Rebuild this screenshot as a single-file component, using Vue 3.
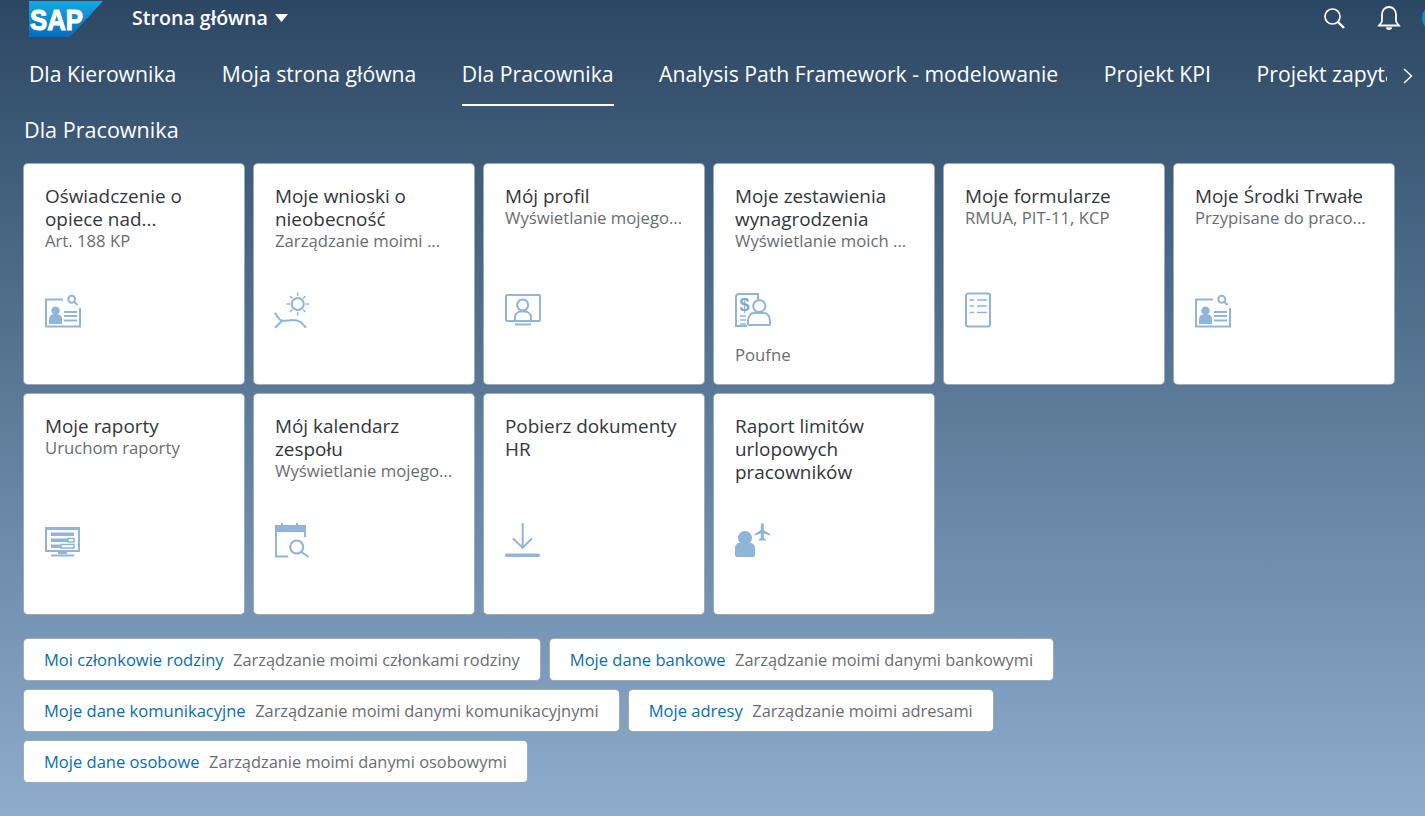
<script setup>
const tabs = ['Dla Kierownika', 'Moja strona główna', 'Dla Pracownika', 'Analysis Path Framework - modelowanie', 'Projekt KPI', 'Projekt zapytań']

const icons = {
  card: [
    { d: 'M18 4.5H1V31.5H35V13' },
    { d: 'M19 17h13M19 21h13M19 25.500h13' },
    { d: 'M26.700 .8a3.500 3.500 0 1 0 .01 0ZM29.500 7l3 3' },
    { d: 'M10.500 11.500a4.200 4.200 0 1 1-.01 0ZM4 29v-5c0-3 2-4.500 4-4.500h5c2 0 4 1.500 4 4.500v5Z', fill: true }
  ],
  sun: [
    { d: 'M22.700 3a6 6 0 1 0 .01 0Z' },
    { d: 'M22.700 -2.500V1M22.700 17v3.500M11.500 9h3.500M30.500 9H34M14.800 1l2.500 2.500M28 14.500l2.500 2.500M30.500 1L28 3.500M17.300 14.500L14.800 17', thin: true },
    { d: 'M0 17.700C2 21 4 25 7 25.700c3.500.6 8-.8 11-.7 3 0 5 .3 7 1.700 2 1.300 4 4 6 6M7 25.700L0 32.700' }
  ],
  profile: [
    { d: 'M2 0h32a1 1 0 0 1 1 1v24a1 1 0 0 1-1 1H2a1 1 0 0 1-1-1V1a1 1 0 0 1 1-1ZM10 29.500h16' },
    { d: 'M17.700 4.500a5.500 5.500 0 1 0 .01 0ZM10 26v-4c0-3 3-5.500 6-5.500h4c3 0 6 2.500 6 5.500v4' }
  ],
  pay: [
    { d: 'M23 5V-1H4a3 3 0 0 0-3 3V31h11' },
    { d: 'M5 21h6M5 25h6M5 29h6', thin: true },
    { d: 'M24.300 5a6 6 0 1 0 .01 0ZM13 29v-3c0-5 3-8 6-8h10c3 0 6 3 6 8v3a1 1 0 0 1-1 1H14a1 1 0 0 1-1-1Z' }
  ],
  form: [
    { d: 'M3 -1.500h20a2 2 0 0 1 2 2v29a2 2 0 0 1-2 2H3a2 2 0 0 1-2-2v-29a2 2 0 0 1 2-2Z' },
    { d: 'M4.500 5H9M12 5h10M4.500 11H9M12 11h10M4.500 17.500H9M12 17.500h10', thin: true }
  ],
  report: [
    { d: 'M1 3h33v23H1Z' },
    { d: 'M0 2h35v3H0ZM6 7.500h23v3.500H6ZM6 13.500h17v3.500H6ZM6 19.500h10v3.500H6Z', fill: true },
    { d: 'M23 13.500h6v3.500h-6ZM16 19.500h13v3.500H16Z', thin: true },
    { d: 'M13 26h9v3h-9ZM6 29.500h23v2H6Z', fill: true }
  ],
  calendar: [
    { d: 'M1 7v24.500h12M30 7v5' },
    { d: 'M0 0h6v-2h2v2h13v-2h2v2h8v7H0Z', fill: true },
    { d: 'M21.700 15.500a6.500 6.500 0 1 0 .01 0ZM26.500 27l7 5' }
  ],
  download: [
    { d: 'M17.700 -2V22.500M8 13.500l9.700 9.200 9.200-9.200' },
    { d: 'M1.700 28.500h31.600a1.700 1.700 0 0 1 0 3.500H1.700a1.700 1.700 0 0 1 0-3.500Z', fill: true }
  ],
  vacation: [
    { d: 'M10 6a7 7 0 1 1-.01 0ZM0 30v-7c0-3 2-5 5-5h10c3 0 5 2 5 5v7a2 2 0 0 1-2 2H2a2 2 0 0 1-2-2Z', fill: true },
    { d: 'M27.300 -2c1 0 1.500 1.500 1.500 3v4l6.200 4v1.500l-6.200-2v4.500l2 1.300v1.200h-7v-1.200l2-1.300V8.500l-6.200 2V9l6.200-4V1c0-1.500.5-3 1.500-3Z', fill: true }
  ]
}

const tiles = [
  { title: 'Oświadczenie o opiece nad...', sub: 'Art. 188 KP', icon: 'card' },
  { title: 'Moje wnioski o nieobecność', sub: 'Zarządzanie moimi ...', icon: 'sun' },
  { title: 'Mój profil', sub: 'Wyświetlanie mojego...', icon: 'profile' },
  { title: 'Moje zestawienia wynagrodzenia', sub: 'Wyświetlanie moich ...', icon: 'pay', foot: 'Poufne' },
  { title: 'Moje formularze', sub: 'RMUA, PIT-11, KCP', icon: 'form' },
  { title: 'Moje Środki Trwałe', sub: 'Przypisane do praco...', icon: 'card' },
  { title: 'Moje raporty', sub: 'Uruchom raporty', icon: 'report' },
  { title: 'Mój kalendarz zespołu', sub: 'Wyświetlanie mojego...', icon: 'calendar' },
  { title: 'Pobierz dokumenty HR', sub: '', icon: 'download' },
  { title: 'Raport limitów urlopowych pracowników', sub: '', icon: 'vacation' }
]

const links = [
  [
    { name: 'Moi członkowie rodziny', desc: 'Zarządzanie moimi członkami rodziny' },
    { name: 'Moje dane bankowe', desc: 'Zarządzanie moimi danymi bankowymi' }
  ],
  [
    { name: 'Moje dane komunikacyjne', desc: 'Zarządzanie moimi danymi komunikacyjnymi' },
    { name: 'Moje adresy', desc: 'Zarządzanie moimi adresami' }
  ],
  [
    { name: 'Moje dane osobowe', desc: 'Zarządzanie moimi danymi osobowymi' }
  ]
]

function iconClass(p) {
  if (p.fill) return 'ic-fill'
  return p.thin ? 'ic-thin' : 'ic-line'
}
</script>

<template>
  <div class="page">
    <header class="shell">
      <svg class="logo" width="76" height="38" viewBox="0 0 76 38">
        <defs>
          <linearGradient id="sapBlue" x1="0" y1="0" x2="0" y2="1">
            <stop offset="0" stop-color="#16a8e6" />
            <stop offset="1" stop-color="#0a6cb8" />
          </linearGradient>
        </defs>
        <path d="M0 1h74L41 37H0Z" fill="url(#sapBlue)" />
        <text x="1" y="30" class="logo-text" textLength="53" lengthAdjust="spacingAndGlyphs">SAP</text>
      </svg>
      <div class="app-title">Strona główna</div>
      <svg class="caret" width="13" height="8" viewBox="0 0 13 8"><path d="M0 0h13L6.500 8Z" fill="#fff" /></svg>
      <div class="shell-right">
        <svg width="24" height="24" viewBox="0 0 24 24" fill="none" stroke="#fff">
          <circle cx="10.500" cy="10.500" r="7.500" stroke-width="1.700" />
          <path d="M16 16l6 6" stroke-width="2.400" />
        </svg>
        <svg width="24" height="26" viewBox="0 0 24 26" fill="none" stroke="#fff" stroke-width="1.800">
          <path d="M5 16V9.500C5 5 8 2 12 2s7 3 7 7.500V16c0 1.500 2 3 3 4.500H2C3 19 5 17.500 5 16Z" />
          <path d="M9.500 22.500c1 2 4 2 5 0" fill="#fff" />
        </svg>
        <div class="avatar"></div>
      </div>
    </header>

    <nav class="tabs">
      <div class="tab-strip">
        <div v-for="(t, i) in tabs" :key="t" class="tab" :class="{ active: i === 2 }">{{ t }}</div>
      </div>
      <svg class="more" width="10" height="16" viewBox="0 0 10 16" fill="none" stroke="#fff" stroke-width="1.400"><path d="M1 1l7.500 7L1 15" /></svg>
    </nav>

    <main class="content">
      <h2 class="section">Dla Pracownika</h2>
      <div class="grid">
        <div v-for="tile in tiles" :key="tile.title" class="tile">
          <div class="tile-title">{{ tile.title }}</div>
          <div v-if="tile.sub" class="tile-sub">{{ tile.sub }}</div>
          <div class="tile-bottom">
            <svg class="tile-icon" width="38" height="38" viewBox="0 0 38 38">
              <path v-for="p in icons[tile.icon]" :key="p.d" :d="p.d" :class="iconClass(p)" />
              <text v-if="tile.icon === 'pay'" x="4.500" y="16" class="ic-text">$</text>
            </svg>
            <div class="tile-foot">{{ tile.foot }}</div>
          </div>
        </div>
      </div>

      <div class="links">
        <div v-for="(row, r) in links" :key="r" class="link-row">
          <div v-for="l in row" :key="l.name" class="link">
            <span class="link-name">{{ l.name }}</span>
            <span class="link-desc">{{ l.desc }}</span>
          </div>
        </div>
      </div>
    </main>
  </div>
</template>

<style>
html, body {
  margin: 0;
  overflow: hidden;
}
</style>

<style scoped>
* {
  box-sizing: border-box;
}
.page {
  width: 1425px;
  height: 816px;
  overflow: hidden;
  font-family: "Open Sans", "Liberation Sans", sans-serif;
  background: linear-gradient(180deg, #2c4763 0%, #3f5c7a 20%, #8eadcd 100%);
  color: #fff;
}
.shell {
  display: flex;
  align-items: center;
  height: 36px;
  padding-left: 29px;
}
.logo {
  flex: none;
  align-self: flex-start;
}
.logo-text {
  font-family: "Liberation Sans", sans-serif;
  font-weight: 700;
  font-size: 29px;
  fill: #fff;
  stroke: #fff;
  stroke-width: 1.1;
}
.app-title {
  margin-left: 27px;
  margin-bottom: 2px;
  font-size: 19.6px;
  font-weight: 600;
}
.caret {
  margin-left: 7px;
}
.shell-right {
  margin-left: auto;
  display: flex;
  align-items: center;
  gap: 31px;
  margin-right: -25px;
}
.avatar {
  width: 28px;
  height: 28px;
  border-radius: 50%;
  background: #0a8fd1;
  margin-left: -10px;
}
.tabs {
  display: flex;
  height: 70px;
  padding-left: 29px;
}
.tab-strip {
  display: flex;
  gap: 45.5px;
  width: 1358px;
  overflow: hidden;
  flex: none;
}
.tab {
  white-space: nowrap;
  font-size: 21.2px;
  line-height: 30px;
  padding: 23px 0 15px;
  border-bottom: 2px solid transparent;
}
.tab.active {
  border-bottom-color: #fff;
}
.more {
  align-self: center;
  margin-left: 16px;
  margin-top: 10px;
}
.content {
  padding: 0 23px;
}
.section {
  margin: 0;
  height: 57px;
  padding: 9px 0 0 1px;
  font-size: 21.6px;
  line-height: 30px;
  font-weight: 400;
}
.grid {
  display: grid;
  grid-template-columns: repeat(6, 222px);
  grid-auto-rows: 222px;
  gap: 8px;
}
.tile {
  display: flex;
  flex-direction: column;
  background: #fff;
  border: 1px solid rgba(40, 70, 100, 0.45);
  border-radius: 5px;
  padding: 21px 20px 0 21px;
  color: #32363a;
}
.tile-title {
  font-size: 18.9px;
  line-height: 23px;
}
.tile-sub {
  font-size: 16.7px;
  line-height: 20px;
  color: #6a6d70;
  white-space: nowrap;
}
.tile-bottom {
  margin-top: auto;
  height: 89px;
}
.tile-icon {
  display: block;
  overflow: visible;
}
.tile-foot {
  margin-top: 12px;
  font-size: 16.7px;
  line-height: 20px;
  color: #6a6d70;
}
.ic-line {
  fill: none;
  stroke: #91b5d9;
  stroke-width: 2;
}
.ic-thin {
  fill: none;
  stroke: #91b5d9;
  stroke-width: 1.500;
}
.ic-fill {
  fill: #91b5d9;
  stroke: none;
}
.ic-text {
  font-family: "Liberation Sans", sans-serif;
  font-weight: 700;
  font-size: 18px;
  fill: #7fa8d0;
}
.links {
  margin-top: 23px;
  display: flex;
  flex-direction: column;
  gap: 8px;
  align-items: flex-start;
}
.link-row {
  display: flex;
  gap: 8px;
}
.link {
  height: 43px;
  padding: 0 20px;
  display: flex;
  align-items: center;
  gap: 9.5px;
  background: #fff;
  border: 1px solid rgba(40, 70, 100, 0.45);
  border-radius: 5px;
  font-size: 16.55px;
  white-space: nowrap;
}
.link-name {
  color: #0a6ea8;
}
.link-desc {
  color: #6a6d70;
  font-size: 16.4px;
}
</style>
